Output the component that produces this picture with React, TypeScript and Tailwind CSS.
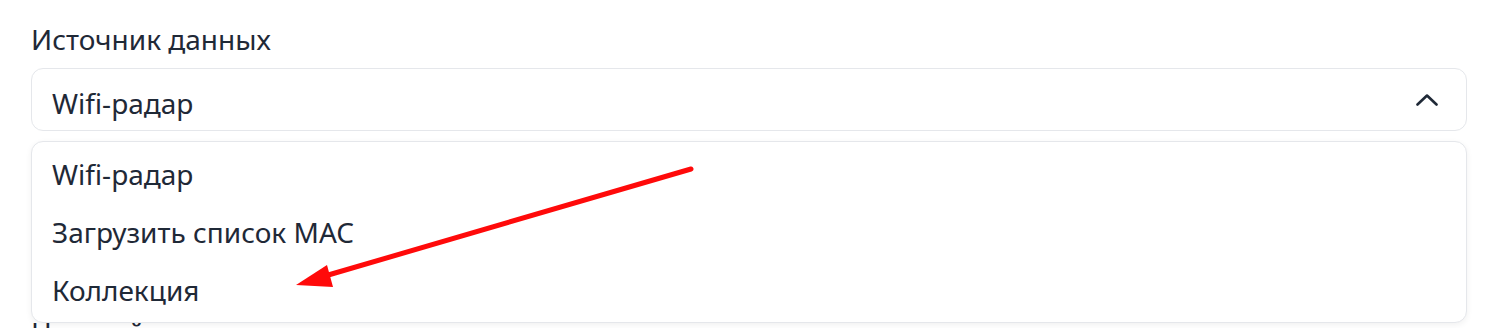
import React from 'react';

const options = ['Wifi-радар', 'Загрузить список MAC', 'Коллекция'];

const App: React.FC = () => {
  return (
    <div className="relative w-[1498px] h-[328px] overflow-hidden bg-white font-['Noto_Sans',sans-serif] text-[#1f2937]">
      <div className="flex flex-col px-[31px] pt-[19px]">
        {/* Поле выбора источника */}
        <label className="text-[28px] leading-[40px]">Источник данных</label>

        <div className="relative mt-[9px]">
          <div className="flex h-[63px] items-center justify-between rounded-[12px] border border-[#e5e7eb] bg-white pl-[20px] pr-[28px] pt-[6px]">
            <span className="text-[28px] leading-[40px]">Wifi-радар</span>
            <svg width="22" height="12" viewBox="0 0 22 12" fill="none" className="-mt-[6px]">
              <path d="M1.5 10.5 L11 1.5 L20.5 10.5" stroke="#1f2937" strokeWidth="2.6" strokeLinecap="round" strokeLinejoin="round" />
            </svg>
          </div>

          {/* Выпадающий список */}
          <div className="absolute left-0 right-0 top-[calc(100%+10px)] z-10 rounded-[12px] border border-[#e5e7eb] bg-white pt-[3px] pb-[3px] shadow-[0_2px_6px_rgba(0,0,0,0.06)]">
            {options.map((o) => (
              <div key={o} className="flex h-[58px] items-center pl-[20px] text-[28px] leading-[40px]">
                {o}
              </div>
            ))}
          </div>
        </div>

        <label className="mt-[181px] text-[28px] leading-[40px]">Настройки</label>
      </div>

      {/* Стрелка-аннотация */}
      <svg className="pointer-events-none absolute inset-0 z-20" width="1498" height="328" viewBox="0 0 1498 328">
        <line x1="691" y1="169" x2="318" y2="278" stroke="#ff0a0a" strokeWidth="5" strokeLinecap="round" />
        <polygon points="296,285 327,265 333,287" fill="#ff0a0a" />
      </svg>
    </div>
  );
};

export default App;
